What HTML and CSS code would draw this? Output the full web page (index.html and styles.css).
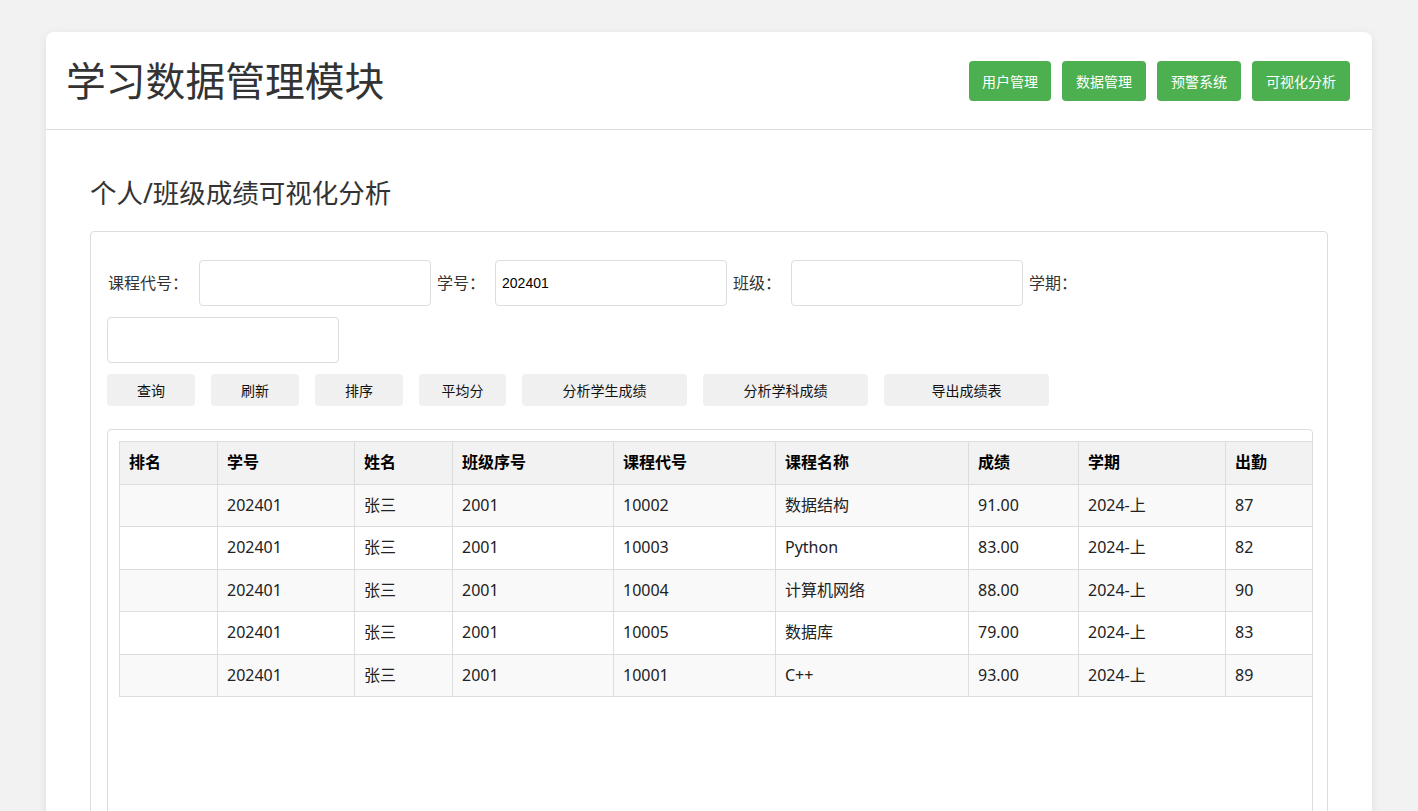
FILE: index.html
```html
<!DOCTYPE html>
<html lang="zh-CN">
<head>
<meta charset="utf-8">
<title>学习数据管理模块</title>
<link rel="stylesheet" href="styles.css">
</head>
<body>
<div class="card">
  <header class="header">
    <h1 class="title">学习数据管理模块</h1>
    <nav class="nav">
      <button class="nav-btn">用户管理</button>
      <button class="nav-btn">数据管理</button>
      <button class="nav-btn">预警系统</button>
      <button class="nav-btn">可视化分析</button>
    </nav>
  </header>
  <main class="content">
    <h2 class="section-title">个人/班级成绩可视化分析</h2>
    <div class="panel">
      <div class="form-row">
        <label class="label">课程代号：</label><input class="input" type="text">
        <label class="label">学号：</label><input class="input" type="text" value="202401">
        <label class="label">班级：</label><input class="input" type="text">
        <label class="label">学期：</label><input class="input" type="text">
      </div>
      <div class="actions">
        <button class="btn btn-sm">查询</button>
        <button class="btn btn-sm">刷新</button>
        <button class="btn btn-sm">排序</button>
        <button class="btn btn-sm">平均分</button>
        <button class="btn btn-lg">分析学生成绩</button>
        <button class="btn btn-lg">分析学科成绩</button>
        <button class="btn btn-lg">导出成绩表</button>
      </div>
      <div class="table-wrap">
        <table class="grade-table">
          <colgroup>
            <col class="c1"><col class="c2"><col class="c3"><col class="c4"><col class="c5"><col class="c6"><col class="c7"><col class="c8"><col class="c9">
          </colgroup>
          <thead>
            <tr><th>排名</th><th>学号</th><th>姓名</th><th>班级序号</th><th>课程代号</th><th>课程名称</th><th>成绩</th><th>学期</th><th>出勤</th></tr>
          </thead>
          <tbody>
            <tr><td></td><td>202401</td><td>张三</td><td>2001</td><td>10002</td><td>数据结构</td><td>91.00</td><td>2024-上</td><td>87</td></tr>
            <tr><td></td><td>202401</td><td>张三</td><td>2001</td><td>10003</td><td>Python</td><td>83.00</td><td>2024-上</td><td>82</td></tr>
            <tr><td></td><td>202401</td><td>张三</td><td>2001</td><td>10004</td><td>计算机网络</td><td>88.00</td><td>2024-上</td><td>90</td></tr>
            <tr><td></td><td>202401</td><td>张三</td><td>2001</td><td>10005</td><td>数据库</td><td>79.00</td><td>2024-上</td><td>83</td></tr>
            <tr><td></td><td>202401</td><td>张三</td><td>2001</td><td>10001</td><td>C++</td><td>93.00</td><td>2024-上</td><td>89</td></tr>
          </tbody>
        </table>
      </div>
    </div>
  </main>
</div>
</body>
</html>
```

FILE: styles.css
```css
* { box-sizing: border-box; }
html, body { margin: 0; padding: 0; }
body {
  background: #f2f2f2;
  font-family: "Noto Sans", "Noto Sans CJK SC", sans-serif;
  color: #333;
}
.card {
  width: 1326px;
  margin: 32px auto 0;
  background: #fff;
  border-radius: 8px;
  box-shadow: 0 2px 10px rgba(0, 0, 0, 0.08);
}
.header {
  height: 98px;
  padding: 0 22px 0 20px;
  display: flex;
  align-items: center;
  justify-content: space-between;
  border-bottom: 1px solid #ddd;
}
.title {
  margin: 0;
  font-size: 39.8px;
  font-weight: normal;
  line-height: 50px;
  color: #333;
}
.nav { display: flex; gap: 11px; }
.nav-btn {
  height: 40px;
  padding: 0 14px;
  border: none;
  border-radius: 4px;
  background: #4caf50;
  color: #fff;
  font-family: "Noto Sans", "Noto Sans CJK SC", sans-serif;
  font-size: 14px;
}
.nav-btn:first-child { padding: 0 13px; }
.content { padding: 45px 44px 0; }
.section-title {
  margin: 0 0 20px;
  font-size: 26.5px;
  font-weight: normal;
  line-height: 36px;
  color: #333;
}
.panel {
  border: 1px solid #ddd;
  border-radius: 4px;
  padding: 28px 14px 0 16px;
  height: 620px;
}
.form-row {
  display: flex;
  flex-wrap: wrap;
  align-items: center;
  row-gap: 11px;
}
.label {
  font-size: 16px;
  color: #333;
  margin-right: 10px;
  line-height: 22px;
}
.label:first-child { margin-left: 1px; margin-right: 11px; }
.input {
  width: 232px;
  height: 46px;
  border: 1px solid #ddd;
  border-radius: 4px;
  padding: 0 6px;
  margin-right: 6px;
  font-family: "Liberation Sans", Arial, sans-serif;
  font-size: 14px;
  color: #000;
  background: #fff;
}
.actions {
  display: flex;
  gap: 16px;
  margin-top: 11px;
}
.btn {
  height: 32px;
  border: none;
  border-radius: 4px;
  background: #f0f0f0;
  color: #111;
  font-family: "Noto Sans", "Noto Sans CJK SC", sans-serif;
  font-size: 14px;
  padding: 0;
}
.btn-sm { width: 88px; }
.btn-sm:nth-child(4) { width: 87px; }
.btn-lg { width: 165px; }
.table-wrap {
  margin-top: 23px;
  border: 1px solid #ddd;
  border-radius: 4px;
  padding: 11px;
  height: 420px;
  overflow-x: hidden;
}
.grade-table {
  border-collapse: collapse;
  table-layout: fixed;
  width: 1257px;
  font-size: 16px;
  color: #222;
}
.c1 { width: 98px; }
.c2 { width: 137px; }
.c3 { width: 98px; }
.c4 { width: 161px; }
.c5 { width: 162px; }
.c6 { width: 193px; }
.c7 { width: 110px; }
.c8 { width: 147px; }
.c9 { width: 151px; }
.grade-table th,
.grade-table td {
  border: 1px solid #ddd;
  padding: 10px 10px 10px 9px;
  line-height: 21.5px;
  text-align: left;
  white-space: nowrap;
}
.grade-table th {
  background: #f2f2f2;
  font-weight: bold;
  color: #000;
}
.grade-table tbody tr:nth-child(odd) td { background: #f9f9f9; }
```
